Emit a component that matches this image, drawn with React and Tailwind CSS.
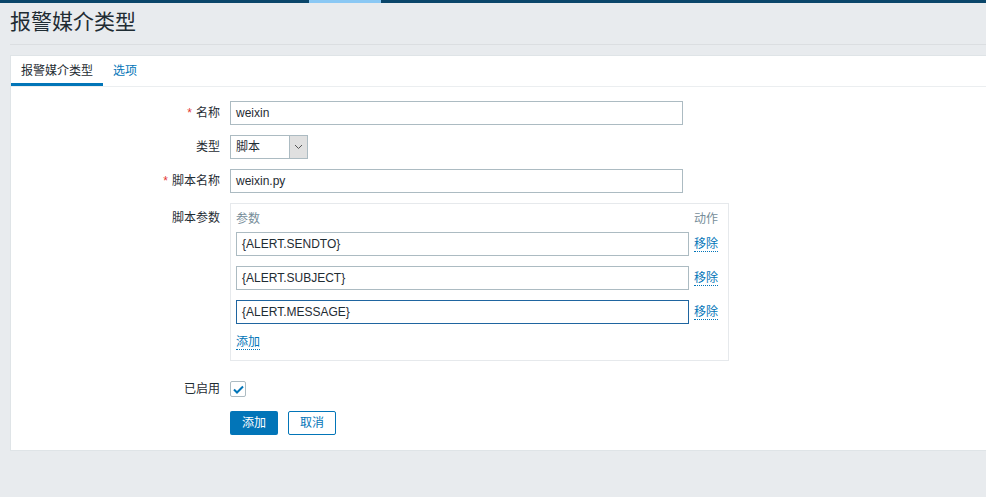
import React from "react";

const font = { fontFamily: '"Liberation Sans", "Noto Sans CJK SC", Arial, sans-serif' };

const Field = ({ label, required, children, top, className = "" }) => (
  <div className={`flex ${top ? "items-start" : "items-center"} ${className}`}>
    <div className={`w-[219px] pr-[10px] text-right text-[12px] text-[#1f2c33] ${top ? "pt-[6px]" : ""}`}>
      {required && <span className="text-[#e33734] mr-[4px]">*</span>}
      {label}
    </div>
    {children}
  </div>
);

const TextInput = ({ value, width = "w-[453px]", focused }) => (
  <div
    className={`${width} h-[24px] flex items-center px-[5px] text-[12px] text-[#1f2c33] bg-white border ${
      focused ? "border-[#1f65a0]" : "border-[#acbbc2]"
    }`}
  >
    {value}
  </div>
);

const LinkText = ({ children }) => (
  <span className="text-[12px] text-[#0275b8] border-b border-dotted border-[#0275b8] leading-[14px]">
    {children}
  </span>
);

export default function App() {
  const params = ["{ALERT.SENDTO}", "{ALERT.SUBJECT}", "{ALERT.MESSAGE}"];

  return (
    <div className="min-h-[497px] bg-[#e8ebee] overflow-hidden" style={font}>
      {/* top strip */}
      <div className="flex h-[3px]">
        <div className="w-[309px] bg-[#0a466a]" />
        <div className="w-[72px] bg-[#8ac8f4]" />
        <div className="flex-1 bg-[#0a466a]" />
      </div>

      {/* header */}
      <div className="ml-[10px] h-[42px] flex items-center border-b border-[#dbdee1]">
        <h1 className="text-[21px] text-[#1f2c33] leading-none pb-[4px]">报警媒介类型</h1>
      </div>

      {/* panel */}
      <div className="ml-[10px] mt-[10px] bg-white border border-r-0 border-[#dfe4e7]">
        <div className="flex h-[31px] border-b border-[#ebeef0] text-[12px]">
          <div className="w-[92px] flex items-center justify-center text-[#1f2c33] border-b-[3px] border-[#0275b8] pt-[3px]">
            报警媒介类型
          </div>
          <div className="px-[10px] flex items-center text-[#0275b8]">选项</div>
        </div>

        <div className="pt-[14px] pb-[15px] flex flex-col gap-[10px]">
          <Field label="名称" required>
            <TextInput value="weixin" />
          </Field>

          <Field label="类型">
            <div className="w-[78px] h-[24px] flex border border-[#acbbc2] bg-white text-[12px] text-[#1f2c33]">
              <div className="flex-1 flex items-center px-[5px]">脚本</div>
              <div className="w-[18px] bg-[#e0e0e0] border-l border-[#acbbc2] flex items-center justify-center">
                <svg width="9" height="6" viewBox="0 0 9 6">
                  <path d="M1 1 L4.5 4.5 L8 1" fill="none" stroke="#555" strokeWidth="1" />
                </svg>
              </div>
            </div>
          </Field>

          <Field label="脚本名称" required>
            <TextInput value="weixin.py" />
          </Field>

          <Field label="脚本参数" top>
            <div className="w-[499px] border border-[#e6e9ec] pl-[5px] pr-[10px] pt-[6px] pb-[10px]">
              <div className="flex justify-between text-[12px] text-[#768d99] mb-[4px]">
                <span>参数</span>
                <span>动作</span>
              </div>
              <div className="flex flex-col gap-[10px]">
                {params.map((p, i) => (
                  <div key={p} className="flex items-center gap-[5px]">
                    <TextInput value={p} focused={i === 2} />
                    <LinkText>移除</LinkText>
                  </div>
                ))}
              </div>
              <div className="mt-[10px] h-[16px] flex items-center">
                <LinkText>添加</LinkText>
              </div>
            </div>
          </Field>

          <Field label="已启用" className="pt-[9px]">
            <div className="w-[16px] h-[16px] border border-[#acbbc2] rounded-[2px] flex items-center justify-center bg-white">
              <svg width="11" height="9" viewBox="0 0 11 9">
                <path d="M1 4.5 L4 7.5 L10 1.5" fill="none" stroke="#0275b8" strokeWidth="2" />
              </svg>
            </div>
          </Field>

          <div className="flex gap-[10px] pl-[219px] mt-[3px]">
            <button className="w-[48px] h-[24px] bg-[#0275b8] text-white text-[12px] rounded-[2px]">添加</button>
            <button className="w-[48px] h-[24px] bg-white text-[#0275b8] border border-[#0275b8] text-[12px] rounded-[2px]">
              取消
            </button>
          </div>
        </div>
      </div>
    </div>
  );
}
